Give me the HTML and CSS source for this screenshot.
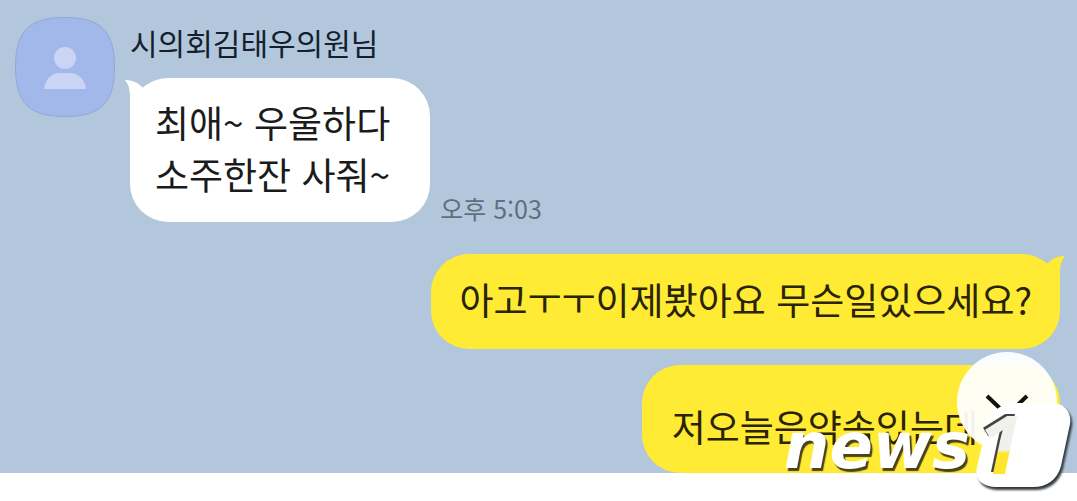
FILE: index.html
```html
<!DOCTYPE html>
<html lang="ko">
<head>
<meta charset="utf-8">
<title>채팅</title>
<link rel="stylesheet" href="styles.css">
</head>
<body>
<main class="chat">
  <section class="received">
    <svg class="avatar" viewBox="0 0 100 100" aria-hidden="true">
      <path class="avatar-shape" d="M50 0.5C86 0.5 99.500 14 99.500 50S86 99.500 50 99.500S0.500 86 0.500 50S14 0.500 50 0.500Z"/>
      <circle class="avatar-person" cx="50" cy="41" r="11"/>
      <path class="avatar-person" d="M29 72C30 62 37 56 45 56H55C63 56 70 62 71 72Z"/>
    </svg>
    <div class="received-body">
      <h1 class="sender">시의회김태우의원님</h1>
      <div class="message-row">
        <p class="bubble bubble-in">최애~ 우울하다<br>소주한잔 사줘~
          <svg class="tail tail-in" viewBox="0 0 24 40" aria-hidden="true"><path d="M0 2C7 2 12 4 17 9L24 12V40H5V20C5 12 4 7 0 2Z"/></svg>
        </p>
        <time class="time">오후 5:03</time>
      </div>
    </div>
  </section>
  <section class="sent">
    <p class="bubble bubble-out">아고ㅜㅜ이제봤아요 무슨일있으세요?
      <svg class="tail tail-out" viewBox="0 0 24 40" aria-hidden="true"><path d="M24 2C17 2 12 4 7 9L0 12V40H19V20C19 12 20 7 24 2Z"/></svg>
    </p>
    <p class="bubble bubble-out bubble-last">저오늘은약속있는데</p>
  </section>
  <button class="scroll-down" type="button" aria-label="아래로">
    <svg class="chevron" viewBox="0 0 44 24" aria-hidden="true"><path d="M2 2L22 21L42 2"/></svg>
  </button>
  <div class="watermark">
    <span class="wordmark">news</span>
    <svg class="badge" viewBox="0 0 100 92" role="img" aria-label="1">
      <defs><linearGradient id="one" gradientUnits="userSpaceOnUse" x1="0" y1="50" x2="0" y2="53"><stop offset="0" stop-color="#f1f0ec"/><stop offset="1" stop-color="#ffe52b"/></linearGradient></defs>
      <path class="badge-shape" d="M42 3H78C90 3 98 12 96 24L87 66C83 80 73 87 59 87H22C8 87 0 79 3 67L12 28C16 11 27 3 42 3Z"/>
      <text class="badge-one" x="4" y="74" fill="url(#one)">1</text>
    </svg>
  </div>
</main>
</body>
</html>
```
FILE: styles.css
```css
* { box-sizing: border-box; }
body {
  margin: 0;
  padding-bottom: 28px;
  background: #fff;
  color: #1b1b1b;
  font-family: "Noto Sans CJK KR", sans-serif;
}
.chat {
  position: relative;
  padding: 16px 17px 0 15px;
  background: #b2c7db;
}
.received { display: flex; gap: 15px; }
.avatar { width: 100px; height: 102px; flex: none; }
.avatar-shape { fill: #a2b7ea; stroke: #93a8d6; stroke-width: 1; }
.avatar-person { fill: #cad5f5; }
.sender {
  margin: 0;
  color: #14202e;
  font-size: 30px;
  font-weight: 400;
  line-height: 52px;
}
.message-row { display: flex; align-items: flex-end; gap: 10px; margin-top: 10px; }
.bubble {
  position: relative;
  margin: 0;
  border-radius: 38px;
  font-size: 37px;
  line-height: 52px;
}
.bubble-in { padding: 18px 40px 22px 25px; background: #fff; }
.time { color: #5f6f7e; font-size: 25px; line-height: 28px; }
.sent {
  display: flex;
  flex-direction: column;
  align-items: flex-end;
  gap: 16px;
  margin-top: 32px;
}
.bubble-out { padding: 19px 28px 24px; background: #ffeb33; color: #2a2305; }
.bubble-last { padding: 35px 82px 21px 30px; border-bottom-right-radius: 24px; }
.tail { position: absolute; top: 0; width: 24px; height: 40px; }
.tail-in { left: -5px; fill: #fff; }
.tail-out { right: -5px; fill: #ffeb33; }
.scroll-down {
  position: absolute;
  right: 20px;
  bottom: 21px;
  display: grid;
  place-items: center;
  width: 100px;
  height: 100px;
  padding: 8px 0 0;
  border: 0;
  border-radius: 50%;
  background: rgb(255 255 255 / 94%);
}
.chevron { width: 44px; height: 24px; fill: none; stroke: #111; stroke-width: 4; }
.watermark {
  position: absolute;
  right: 3px;
  bottom: -19px;
  display: flex;
  align-items: flex-end;
  gap: 4px;
}
.wordmark {
  color: #fff;
  font: italic 700 64px/92px "DejaVu Sans", sans-serif;
  text-shadow: 2px 3px 1px #4a421a;
}
.badge { width: 100px; height: 92px; overflow: visible; filter: drop-shadow(2px 3px 1px #333a40); }
.badge-shape { fill: #fff; }
.badge-one {
  font: italic 700 80px "Open Sans", sans-serif;
  filter: drop-shadow(-2px -2px 0 #444);
}
```
